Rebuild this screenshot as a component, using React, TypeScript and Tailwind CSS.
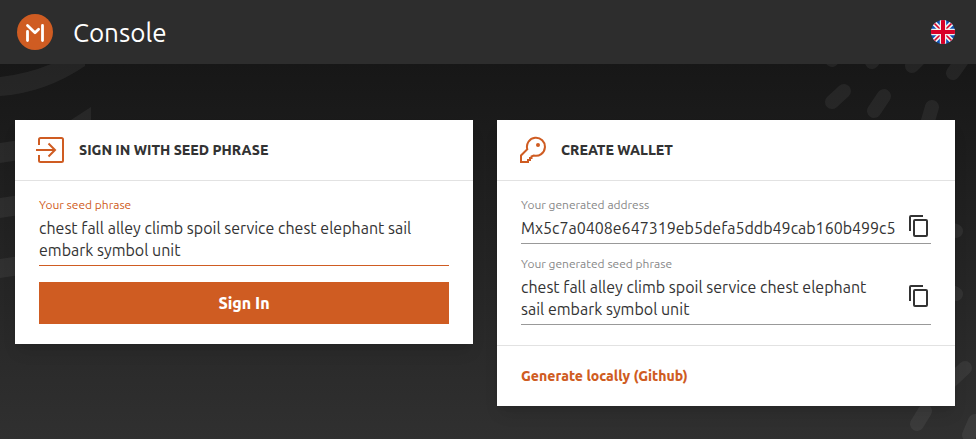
import { useState } from 'react'

const phrase = 'chest fall alley climb spoil service chest elephant sail embark symbol unit'
const address = 'Mx5c7a0408e647319eb5defa5ddb49cab160b499c5'

function Logo() {
  return (
    <svg viewBox="0 0 36 36" className="size-9" aria-hidden="true">
      <circle cx="18" cy="18" r="18" fill="#cf5c22" />
      <path d="M10.5 17.5v9M10.5 11.5l7.5 7.3 3.6-3.6M25.5 11.5v15" fill="none" stroke="#fff" strokeWidth="2.8" strokeLinecap="round" strokeLinejoin="round" />
    </svg>
  )
}

function Flag() {
  return (
    <svg viewBox="0 0 24 24" className="size-6" aria-hidden="true">
      <clipPath id="round"><circle cx="12" cy="12" r="12" /></clipPath>
      <g clipPath="url(#round)">
        <path d="M0 0h24v24H0z" fill="#0a52b5" />
        <path d="M0 0l24 24M24 0L0 24" stroke="#f0f0f0" strokeWidth="5" />
        <path d="M3 3l6 6M21 3l-6 6M3 21l6-6M21 21l-6-6" stroke="#d80027" strokeWidth="1.6" />
        <path d="M12 0v24M0 12h24" stroke="#f0f0f0" strokeWidth="6.4" />
        <path d="M12 0v24M0 12h24" stroke="#d80027" strokeWidth="4" />
      </g>
    </svg>
  )
}

function SignInIcon() {
  return (
    <svg viewBox="0 0 28 28" className="size-7" fill="none" stroke="#cf5c22" strokeWidth="2" aria-hidden="true">
      <path d="M3 9V3.5Q3 2 4.5 2H25.5Q27 2 27 3.5V24.5Q27 26 25.5 26H4.5Q3 26 3 24.5V19M0 14h19M12.5 7.5L19 14l-6.5 6.5" />
    </svg>
  )
}

function KeyIcon() {
  return (
    <svg viewBox="0 0 28 28" className="size-7" aria-hidden="true">
      <path d="M9.3 13.3A9 9 0 1 1 15.7 19.5L13.5 20.5V22H12V24H10V26H3V19.5Z" fill="none" stroke="#cf5c22" strokeWidth="2" />
      <circle cx="20" cy="9" r="2" fill="#cf5c22" />
    </svg>
  )
}

function CopyIcon() {
  return (
    <svg viewBox="0 0 24 24" className="size-6" fill="#333" aria-hidden="true">
      <path d="M16 1H4a2 2 0 0 0-2 2v14h2V3h12V1zm3 4H8a2 2 0 0 0-2 2v14a2 2 0 0 0 2 2h11a2 2 0 0 0 2-2V7a2 2 0 0 0-2-2zm0 16H8V7h11v14z" />
    </svg>
  )
}

function Backdrop() {
  return (
    <svg className="absolute inset-0 size-full" aria-hidden="true">
      <path
        d="M0 13Q27 10 51 0H85V2Q45 29 0 32zM71 56L91 43V70H60zM0 79L20 76V96L0 99zM0 134L20 131V151L0 154zM0 195L20 192V211L0 214z"
        fill="#fff"
        fillOpacity="0.06"
      />
      <svg x="100%" overflow="visible">
        <path
          d="M-144 -4l6 -8M-104 -2l10 -12M-64 2l14 -14M-23 9l12 -17M-144 38l12 -11M-102 47l10 -15M-44 43l-5 17M-20 167l-8 -3M-20 230l-8 -4M-11 304l-15 14M-51 347l-8 13M-1 357l-6 14"
          fill="none"
          stroke="#fff"
          strokeOpacity="0.06"
          strokeWidth="14"
          strokeLinecap="round"
        />
      </svg>
    </svg>
  )
}

function CopyField({ label, value }: { label: string; value: string }) {
  return (
    <div className="flex items-center justify-between gap-4 border-b border-[#999] pb-1">
      <div className="min-w-0">
        <div className="text-xs leading-4 text-[#888]">{label}</div>
        <div className="mt-1 text-base leading-[22px]">{value}</div>
      </div>
      <button aria-label={'Copy ' + label} className="mt-4 shrink-0"><CopyIcon /></button>
    </div>
  )
}

export default function App() {
  const [seed, setSeed] = useState(phrase)

  return (
    <div className="min-h-screen flex flex-col bg-[#303030] text-[#333] font-['Ubuntu','Noto_Sans',sans-serif]">
      <header className="h-16 pl-[17px] pr-[21px] flex items-center justify-between bg-[#2d2d2d]">
        <a href="#" className="flex items-center gap-5 text-[26px] text-white">
          <Logo />
          Console
        </a>
        <button aria-label="Language"><Flag /></button>
      </header>
      <main className="relative flex-1 overflow-hidden bg-linear-to-b from-[#171717] to-[#303030]">
        <Backdrop />
        <div className="relative grid grid-cols-2 items-start gap-6 pt-14 pb-8 pl-[15px] pr-[21px]">
          <section className="bg-white shadow-lg">
            <div className="h-[61px] px-[21px] flex items-center gap-[15px] border-b border-[#e2e2e2]">
              <SignInIcon />
              <h2 className="text-sm font-extrabold uppercase">Sign in with seed phrase</h2>
            </div>
            <form className="px-6 pt-4 pb-5" onSubmit={e => e.preventDefault()}>
              <label htmlFor="seed" className="block text-xs leading-4 text-[#cf5c22]">Your seed phrase</label>
              <textarea
                id="seed"
                rows={2}
                value={seed}
                onChange={e => setSeed(e.target.value)}
                className="mt-1 block w-full resize-none overflow-hidden border-b border-[#cf5c22] pb-1 text-base leading-[22px] outline-none"
              />
              <button className="mt-4 h-[42px] w-full bg-[#cf5c22] font-extrabold text-white">Sign In</button>
            </form>
          </section>
          <section className="bg-white shadow-lg">
            <div className="h-[61px] px-[21px] flex items-center gap-[15px] border-b border-[#e2e2e2]">
              <KeyIcon />
              <h2 className="text-sm font-extrabold uppercase">Create wallet</h2>
            </div>
            <div className="px-6 pt-4 pb-5 space-y-3">
              <CopyField label="Your generated address" value={address} />
              <CopyField label="Your generated seed phrase" value={phrase} />
            </div>
            <div className="px-6 py-5 flex border-t border-[#e2e2e2]">
              <a href="#" className="text-sm font-extrabold text-[#cf5c22]">Generate locally (Github)</a>
            </div>
          </section>
        </div>
      </main>
    </div>
  )
}
